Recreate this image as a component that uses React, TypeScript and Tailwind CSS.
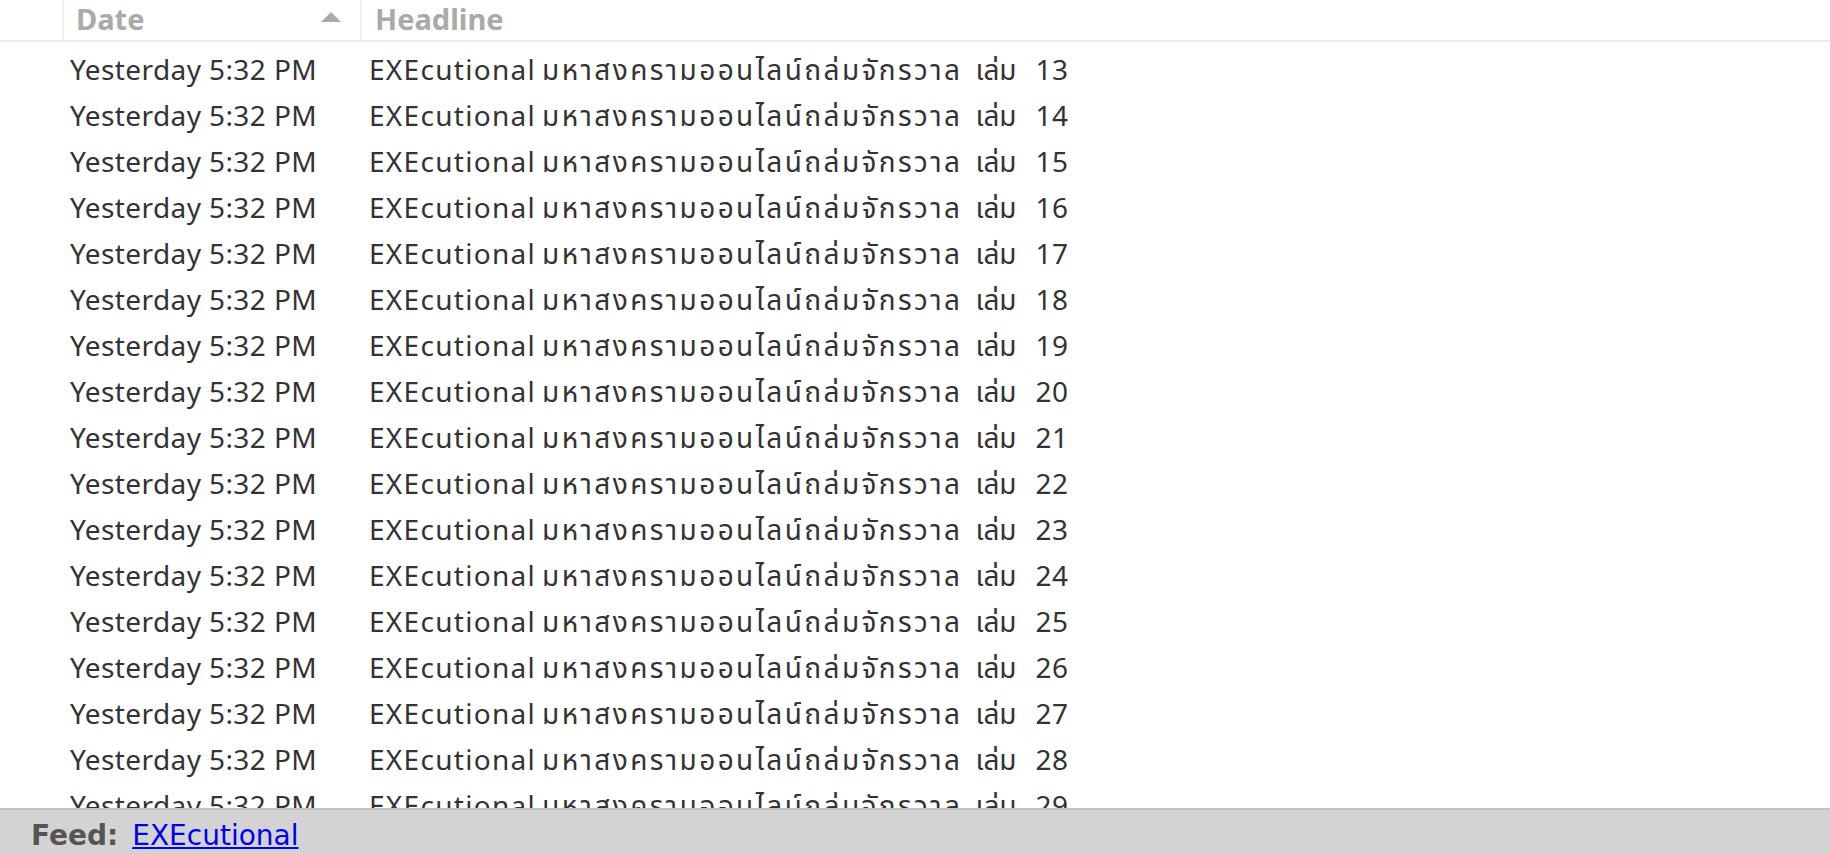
const rows = Array.from({ length: 17 }, (_, i) => ({
  date: "Yesterday 5:32 PM",
  num: i + 13,
}))

const SortUp = () => (
  <svg width="20" height="10" viewBox="0 0 20 10" className="mb-[7px]">
    <polygon points="10,0 20,10 0,10" fill="#aaaaaa" />
  </svg>
)

const App = () => {
  return (
    <div className="h-screen w-full flex flex-col overflow-hidden bg-white font-['Noto_Sans','Noto_Sans_Thai',sans-serif]">
      <div className="flex h-[42px] shrink-0 border-b-2 border-[#ececec]">
        <div className="w-[64px] border-r-2 border-[#efefef]" />
        <div className="w-[298px] border-r-2 border-[#efefef] flex items-center justify-between pl-[12px] pr-[19px]">
          <span className="text-[29px] font-bold text-[#aaaaaa] leading-none mb-[4px]">Date</span>
          <SortUp />
        </div>
        <div className="flex items-center pl-[13px]">
          <span className="text-[29px] font-bold text-[#aaaaaa] leading-none mb-[4px]">Headline</span>
        </div>
      </div>

      <div className="flex-1 overflow-hidden pt-[4px]">
        {rows.map((row, i) => (
          <div key={i} className="flex h-[46px] items-center text-[28px] text-[#333333]">
            <div className="w-[362px] pl-[70px] whitespace-nowrap tracking-[0.4px]">{row.date}</div>
            <div className="pl-[7px] whitespace-nowrap flex">
              <span className="tracking-[1.3px]">EXEcutional</span>
              <span className="ml-[6px] tracking-[2.4px]">มหาสงครามออนไลน์ถล่มจักรวาล</span>
              <span className="ml-[13px]">เล่ม</span>
              <span className="ml-[19px] tracking-[0.5px]">{row.num}</span>
            </div>
          </div>
        ))}
      </div>

      <div className="h-[46px] shrink-0 border-t-2 border-[#c2c2c2] bg-[#d3d3d3] flex items-center pl-[31px] pt-[7px] font-['DejaVu_Sans',sans-serif] text-[28px]">
        <span className="font-bold text-[#555555]">Feed:</span>
        <a href="#" className="ml-[14px] text-[#0000ee] underline">EXEcutional</a>
      </div>
    </div>
  )
}

export default App
